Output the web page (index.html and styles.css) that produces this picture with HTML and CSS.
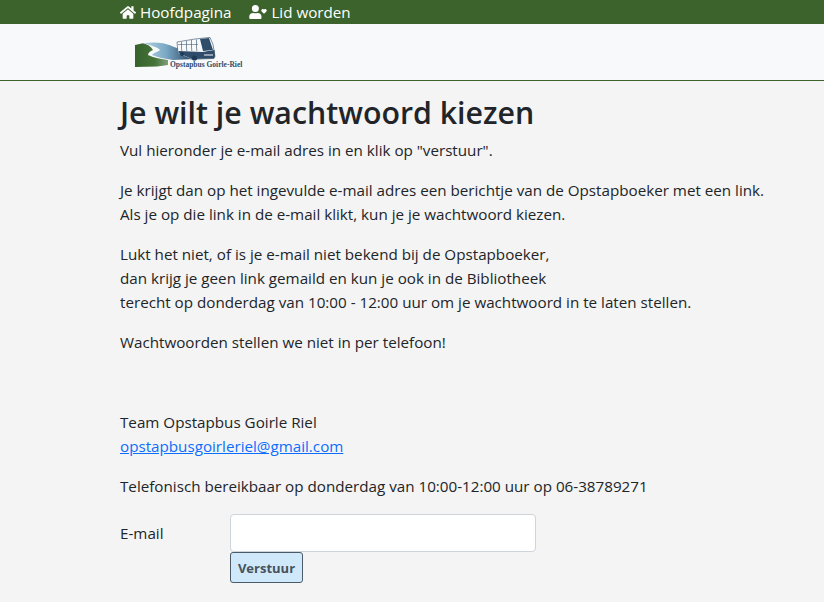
FILE: index.html
```html
<!DOCTYPE html>
<html lang="nl">
<head>
<meta charset="utf-8">
<title>Wachtwoord kiezen</title>
<link rel="stylesheet" href="styles.css">
</head>
<body>
<nav class="topbar">
  <a class="toplink" href="#"><svg class="ico" viewBox="0 0 576 512" width="16" height="15"><path fill="currentColor" d="M280 148 96 300v164c0 9 7 16 16 16l112-.3c9 0 16-7 16-16V368c0-9 7-16 16-16h64c9 0 16 7 16 16v95.600c0 9 7 16 16 16l112 .4c9 0 16-7 16-16V300L296 148c-4-3-12-3-16 0zM572 251l-84-69V44c0-7-5-12-12-12h-56c-7 0-12 5-12 12v72l-89-74c-18-14-43-14-61 0L4 251c-5 4-6 12-2 17l26 31c4 5 12 6 17 2L280 107c4-3 12-3 16 0l235 194c5 4 13 3 17-2l26-31c4-5 3-13-2-17z"/></svg>Hoofdpagina</a>
  <a class="toplink" href="#"><svg class="ico" viewBox="0 0 640 512" width="18" height="14"><path fill="currentColor" d="M224 256a128 128 0 1 0 0-256 128 128 0 0 0 0 256zm90 32h-17a174 174 0 0 1-146 0h-17C60 288 0 348 0 422v42c0 27 21 48 48 48h352c27 0 48-21 48-48v-42c0-74-60-134-134-134zM622 160c-21-22-55-20-75 1l-7 7-7-7c-20-21-54-23-75-1-22 20-23 54-3 75l72 75c7 7 19 7 26 0l72-75c20-21 19-55-3-75z"/></svg>Lid worden</a>
</nav>
<header class="brand">
  <svg class="logo" viewBox="0 0 108 32" width="108" height="32">
    <defs>
      <linearGradient id="road" x1="0" x2="1" y1="0" y2="0">
        <stop offset="0" stop-color="#b5d2e0"/><stop offset="0.45" stop-color="#7ba9c6"/><stop offset="1" stop-color="#24405e"/>
      </linearGradient>
      <linearGradient id="grass" x1="0" x2="1" y1="0" y2="0">
        <stop offset="0" stop-color="#35622a"/><stop offset="0.6" stop-color="#46733a"/><stop offset="1" stop-color="#7f9f78"/>
      </linearGradient>
    </defs>
    <path fill="url(#grass)" d="M0 8 8 6.300c4 1 8 3 10 6.700-3 1-5 3-5 5 6 3 14 4 20 5l0 5-11 1.500-22 .5z"/>
    <path fill="url(#road)" d="M8 6.300c7-1 14-1 20 0 5 1 9 3 14 4.700l14 4 3 7-21 1c-8-1-16-3-21-5 1-2 6-3 8-5-1-1-2-2-3-2.300-4-1.700-9-3-14-4.400z"/>
    <path fill="#f6f8fa" stroke="#2f4d6b" stroke-width=".6" d="M42 5 60 2 75 .4l3 7 2 12-1 2-22 1-14-6z"/>
    <path fill="#2f4d6b" d="M65 2l9-1 4 12-10 1zM43 7h20v.6H43zM46 5l.6 0 .6 9h-.6zM51 4l.6 0 .6 10h-.6zM56 3l.6 0 .6 11h-.6zM61 2.600l.6 0 .6 11.400h-.6zM43.500 14l24 1 12-2 .5 6-1 2.500-22 .5-13.500-6z"/>
    <rect x="69" y="17.500" width="9" height="1" fill="#f6f8fa"/>
    <circle cx="47" cy="17" r="2" fill="#1f3a56"/>
    <circle cx="59.500" cy="21" r="2.600" fill="#1f3a56"/>
    <text x="35" y="29.500" class="logotext">Opstapbus Goirle-Riel</text>
  </svg>
</header>
<main class="content">
  <h1 class="title">Je wilt je wachtwoord kiezen</h1>
  <p class="para">Vul hieronder je e-mail adres in en klik op "verstuur".</p>
  <p class="para">Je krijgt dan op het ingevulde e-mail adres een berichtje van de Opstapboeker met een link.<br>Als je op die link in de e-mail klikt, kun je je wachtwoord kiezen.</p>
  <p class="para">Lukt het niet, of is je e-mail niet bekend bij de Opstapboeker,<br>dan krijg je geen link gemaild en kun je ook in de Bibliotheek<br>terecht op donderdag van 10:00 - 12:00 uur om je wachtwoord in te laten stellen.</p>
  <p class="para">Wachtwoorden stellen we niet in per telefoon!</p>
  <p class="para spacer">&nbsp;</p>
  <p class="para">Team Opstapbus Goirle Riel<br><a class="mail" href="#">opstapbusgoirleriel@gmail.com</a></p>
  <p class="para">Telefonisch bereikbaar op donderdag van 10:00-12:00 uur op 06-38789271</p>
  <form class="form">
    <label class="label" for="email">E-mail</label>
    <div class="fields">
      <input class="input" id="email" type="email">
      <button class="btn" type="button">Verstuur</button>
    </div>
  </form>
</main>
</body>
</html>
```
FILE: styles.css
```css
* { box-sizing: border-box; }
html, body { margin: 0; }
body {
  background: #f4f4f4;
  color: #212529;
  font-family: "Open Sans", "Noto Sans", sans-serif;
  font-size: 15.2px;
  line-height: 24px;
  overflow: hidden;
}
.topbar {
  background: #3c632c;
  height: 24px;
  padding-left: 120px;
  display: flex;
  gap: 18px;
}
.toplink {
  color: #fff;
  text-decoration: none;
  display: flex;
  align-items: center;
  gap: 4px;
  font-size: 15.2px;
}
.ico { display: block; }
.brand {
  background: #f8f9fa;
  height: 57px;
  border-bottom: 1px solid #3c632c;
  padding: 13px 0 0 135px;
}
.logo { display: block; }
.logotext {
  font-family: "Liberation Serif", serif;
  font-size: 7.500px;
  font-weight: 700;
  fill: #2f4d6b;
}
.content { padding: 13px 0 0 120px; }
.title {
  margin: 0 0 6px;
  font-size: 30.3px;
  line-height: 38px;
  font-weight: 600;
}
.para { margin: 0 0 16px; }
.spacer { margin-bottom: 16px; }
.mail { color: #0d6efd; }
.form { display: flex; }
.label { width: 110px; padding-top: 7px; }
.fields { display: flex; flex-direction: column; align-items: flex-start; }
.input {
  width: 306px;
  height: 38px;
  background: #fff;
  border: 1px solid #ced4da;
  border-radius: 4px;
  display: block;
}
.btn {
  height: 31px;
  width: 73px;
  padding: 0;
  background: #cfe9fb;
  border: 1px solid #4a5a68;
  border-radius: 3px;
  color: #47525c;
  font: 700 13px "Open Sans", sans-serif;
}
```
